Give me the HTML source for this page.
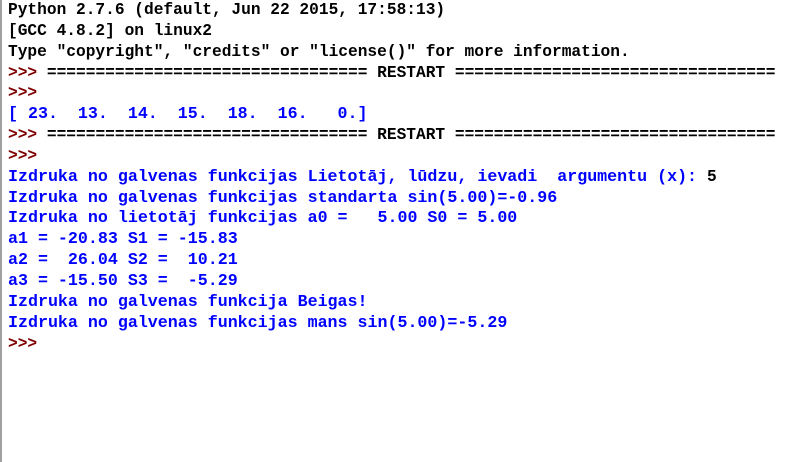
<!DOCTYPE html>
<html><head><meta charset="utf-8"><style>
html,body{margin:0;padding:0;background:#fff;width:798px;height:462px;overflow:hidden}
.b{position:absolute;left:0;top:0;width:2px;height:462px;background:#a0a0a0}
pre{position:absolute;left:8px;top:0;margin:0;font-family:"Liberation Mono",monospace;font-weight:bold;font-size:16.2px;line-height:20.85px;color:#000;white-space:pre}
.r{color:#7f0000}.u{color:#0000ff;font-size:16.65px}
</style></head><body><div class="b"></div>
<pre>Python 2.7.6 (default, Jun 22 2015, 17:58:13) 
[GCC 4.8.2] on linux2
Type "copyright", "credits" or "license()" for more information.
<span class="r">&gt;&gt;&gt;</span> ================================= RESTART =================================
<span class="r">&gt;&gt;&gt;</span> 
<span class="u">[ 23.  13.  14.  15.  18.  16.   0.]</span>
<span class="r">&gt;&gt;&gt;</span> ================================= RESTART =================================
<span class="r">&gt;&gt;&gt;</span> 
<span class="u">Izdruka no galvenas funkcijas Lietotāj, lūdzu, ievadi  argumentu (x): </span>5
<span class="u">Izdruka no galvenas funkcijas standarta sin(5.00)=-0.96</span>
<span class="u">Izdruka no lietotāj funkcijas a0 =   5.00 S0 = 5.00</span>
<span class="u">a1 = -20.83 S1 = -15.83</span>
<span class="u">a2 =  26.04 S2 =  10.21</span>
<span class="u">a3 = -15.50 S3 =  -5.29</span>
<span class="u">Izdruka no galvenas funkcija Beigas!</span>
<span class="u">Izdruka no galvenas funkcijas mans sin(5.00)=-5.29</span>
<span class="r">&gt;&gt;&gt;</span> </pre>
</body></html>
